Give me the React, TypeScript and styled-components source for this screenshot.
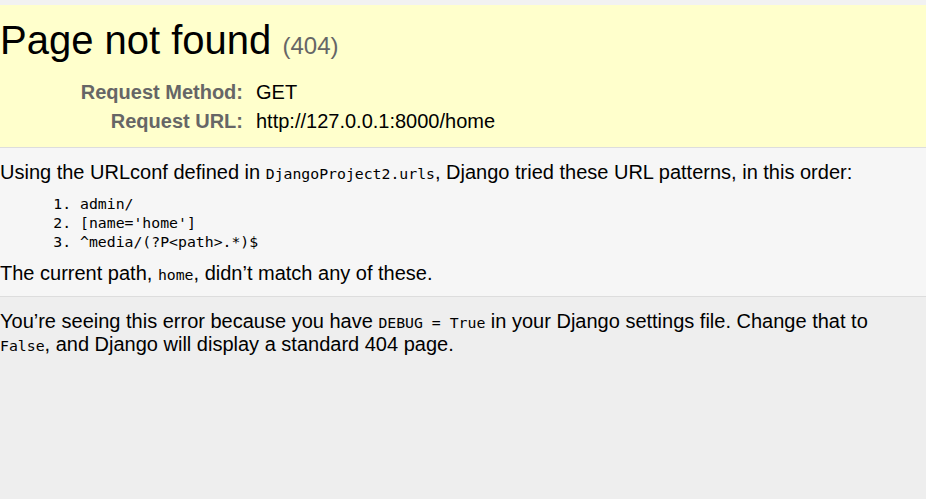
import React from "react";
import styled, { createGlobalStyle } from "styled-components";

const Global = createGlobalStyle`
  html, body { margin: 0; padding: 0; }
  body {
    background: #eee;
    color: #000;
    font-family: "Liberation Sans", Arial, sans-serif;
    font-size: 20px;
  }
`;

const Page = styled.div`
  min-height: 100vh;
  display: flex;
  flex-direction: column;
`;

const TopStrip = styled.div`
  height: 5px;
  background: #f2f2f2;
`;

const Section = styled.div<{ $bg: string; $pt: number; $pb: number; $border?: boolean; $grow?: boolean }>`
  background: ${(p) => p.$bg};
  padding: ${(p) => p.$pt}px 30px ${(p) => p.$pb}px 0;
  border-bottom: ${(p) => (p.$border ? "1px solid #ddd" : "none")};
  flex: ${(p) => (p.$grow ? "1 1 auto" : "0 0 auto")};
`;

const Title = styled.h1`
  margin: 0 0 15px 0;
  font-size: 40px;
  font-weight: normal;
  line-height: normal;
`;

const Muted = styled.span`
  font-size: 60%;
  color: #666;
  font-weight: normal;
`;

const Table = styled.table`
  border: none;
  border-collapse: collapse;
`;

const Th = styled.th`
  width: 243px;
  text-align: right;
  vertical-align: top;
  color: #666;
  font-weight: bold;
  padding: 3px 10px 3px 0;
`;

const Td = styled.td`
  vertical-align: top;
  padding: 3px 3px;
`;

const Para = styled.p`
  margin: 0;
  line-height: normal;
`;

const Code = styled.code`
  font-family: "DejaVu Sans Mono", "Liberation Mono", monospace;
  font-size: 14.8px;
`;

const List = styled.ol`
  margin: 10px 0 11px 80px;
  padding: 0;
`;

const Item = styled.li`
  font-family: "DejaVu Sans Mono", "Liberation Mono", monospace;
  font-size: 14.8px;
  line-height: 19px;
`;

export default function App() {
  return (
    <Page>
      <Global />
      <TopStrip />
      <Section $bg="#ffc" $pt={13} $pb={11} $border>
        <Title>
          Page not found <Muted>(404)</Muted>
        </Title>
        <Table>
          <tbody>
            <tr>
              <Th>Request Method:</Th>
              <Td>GET</Td>
            </tr>
            <tr>
              <Th>Request URL:</Th>
              <Td>http://127.0.0.1:8000/home</Td>
            </tr>
          </tbody>
        </Table>
      </Section>
      <Section $bg="#f6f6f6" $pt={13} $pb={11} $border>
        <Para>
          Using the URLconf defined in <Code>DjangoProject2.urls</Code>, Django tried these URL patterns, in this order:
        </Para>
        <List>
          <Item>admin/</Item>
          <Item>[name='home']</Item>
          <Item>^media/(?P&lt;path&gt;.*)$</Item>
        </List>
        <Para>
          The current path, <Code>home</Code>, didn’t match any of these.
        </Para>
      </Section>
      <Section $bg="#eee" $pt={13} $pb={12} $grow>
        <Para>
          You’re seeing this error because you have <Code>DEBUG = True</Code> in your Django settings file. Change that to <Code>False</Code>, and Django will display a standard 404 page.
        </Para>
      </Section>
    </Page>
  );
}
